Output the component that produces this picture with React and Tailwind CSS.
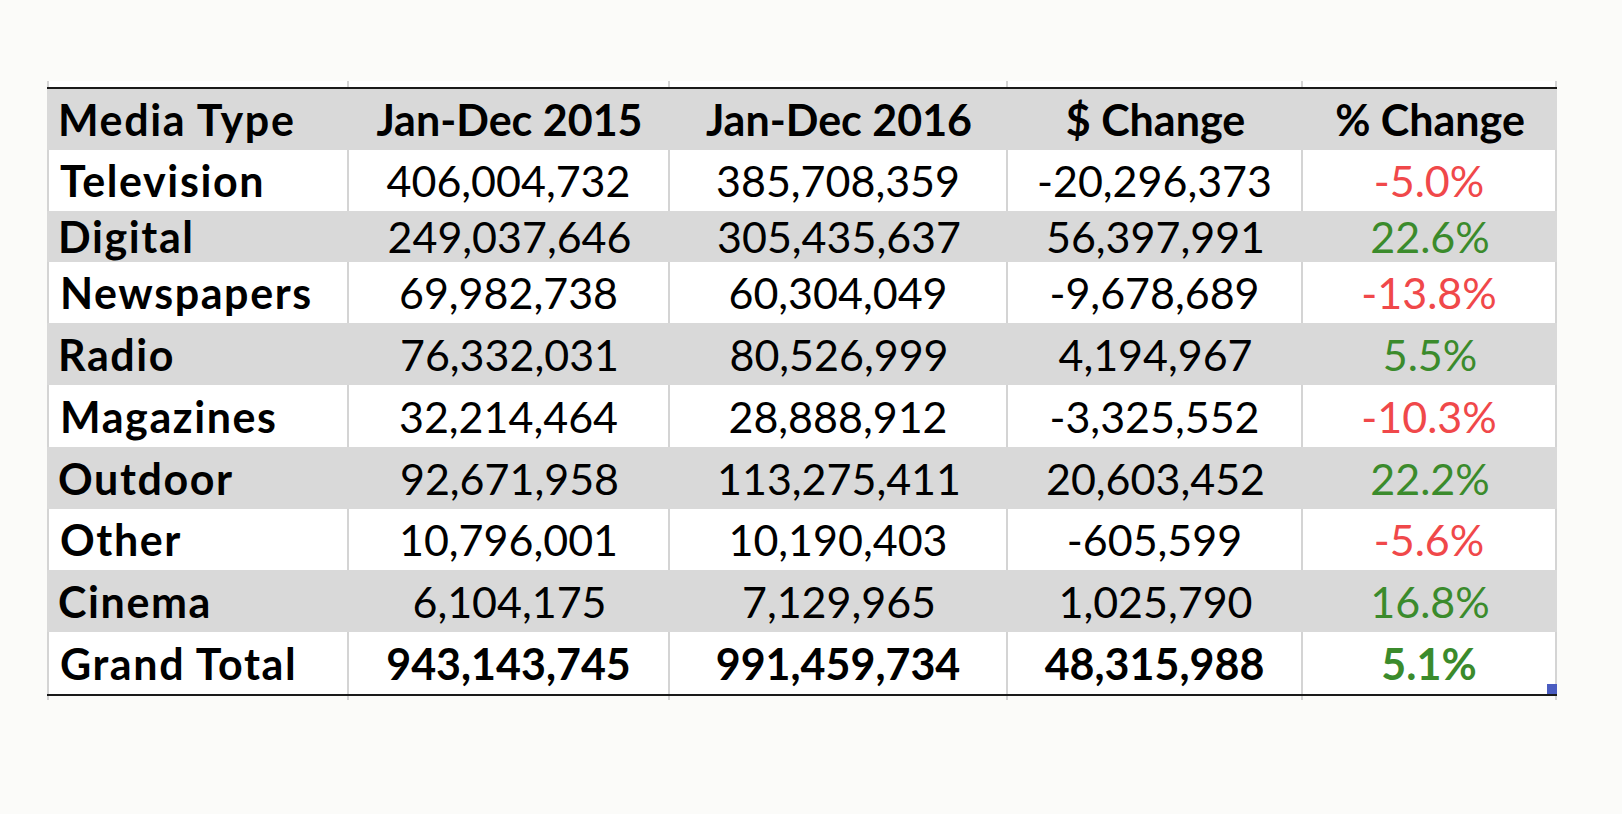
const cols = ['w-[302px]', 'w-[321px]', 'w-[338px]', 'w-[295px]', 'w-[254px]'];

const rows = [
  { name: 'Television', a: '406,004,732', b: '385,708,359', d: '-20,296,373', p: '-5.0%', h: 'h-[61px]' },
  { name: 'Digital', a: '249,037,646', b: '305,435,637', d: '56,397,991', p: '22.6%', h: 'h-[51px]' },
  { name: 'Newspapers', a: '69,982,738', b: '60,304,049', d: '-9,678,689', p: '-13.8%', h: 'h-[61px]' },
  { name: 'Radio', a: '76,332,031', b: '80,526,999', d: '4,194,967', p: '5.5%', h: 'h-[62px]' },
  { name: 'Magazines', a: '32,214,464', b: '28,888,912', d: '-3,325,552', p: '-10.3%', h: 'h-[62px]' },
  { name: 'Outdoor', a: '92,671,958', b: '113,275,411', d: '20,603,452', p: '22.2%', h: 'h-[62px]' },
  { name: 'Other', a: '10,796,001', b: '10,190,403', d: '-605,599', p: '-5.6%', h: 'h-[61px]' },
  { name: 'Cinema', a: '6,104,175', b: '7,129,965', d: '1,025,790', p: '16.8%', h: 'h-[62px]' },
];

function Stub({ h }) {
  return (
    <div className={`flex ${h}`}>
      {cols.map((w, i) => (
        <div key={i} className={`${w} border-r-2 border-[#d4d4d4] ${i === 0 ? 'border-l-2' : ''}`} />
      ))}
    </div>
  );
}

function Row({ cells, h, shaded, bold, pctColor }) {
  const line = shaded ? '' : 'border-r-2 border-[#d4d4d4]';
  return (
    <div className={`flex ${h} ${shaded ? 'bg-[#d9d9d9]' : 'bg-white'}`}>
      {cells.map((c, i) => (
        <div
          key={i}
          className={`${cols[i]} flex items-center ${line} ${i === 0 && !shaded ? 'border-l-2' : ''} ${
            i === 0 ? 'justify-start pl-[11px] font-bold tracking-[1.6px]' : 'justify-center'
          } ${bold ? 'font-bold' : ''} ${i === 4 ? pctColor : 'text-black'}`}
        >
          {c}
        </div>
      ))}
    </div>
  );
}

export default function App() {
  return (
    <div className="h-[814px] w-full bg-[#fbfbf9] pt-[81px] pl-[47px] text-[43px] leading-none" style={{ fontFamily: 'Lato, "Noto Sans", sans-serif' }}>
      <div className="w-[1510px]">
        <div className="bg-white">
          <Stub h="h-[6px]" />
        </div>
        <div className="h-[2px] bg-[#1a1a1a]" />
        <Row
          cells={['Media Type', 'Jan-Dec 2015', 'Jan-Dec 2016', '$ Change', '% Change']}
          h="h-[61px]"
          shaded
          bold
          pctColor="text-black"
        />
        {rows.map((r, i) => (
          <Row
            key={r.name}
            cells={[r.name, r.a, r.b, r.d, r.p]}
            h={r.h}
            shaded={i % 2 === 1}
            pctColor={r.p.startsWith('-') ? 'text-[#f0484a]' : 'text-[#3b8b2c]'}
          />
        ))}
        <div className="relative">
          <Row
            cells={['Grand Total', '943,143,745', '991,459,734', '48,315,988', '5.1%']}
            h="h-[62px]"
            bold
            pctColor="text-[#3b8b2c]"
          />
          <div className="absolute right-0 bottom-0 h-[10px] w-[10px] bg-[#4a5cc0]" />
        </div>
        <div className="h-[2px] bg-[#1a1a1a]" />
        <Stub h="h-[4px]" />
      </div>
    </div>
  );
}
